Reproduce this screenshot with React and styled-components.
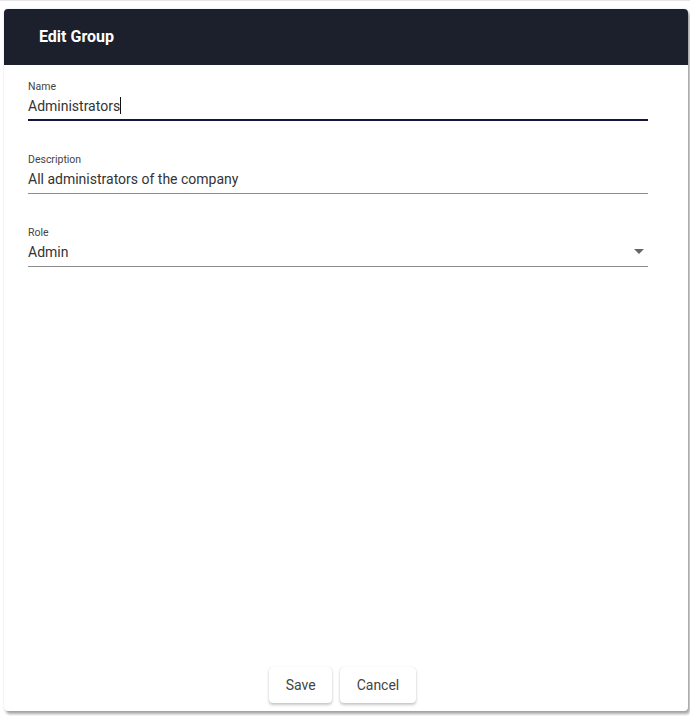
import React from 'react';
import styled, { createGlobalStyle } from 'styled-components';

const GlobalStyle = createGlobalStyle`
    html, body {
        margin: 0;
        padding: 0;
        background: #ffffff;
        font-family: Roboto, "Liberation Sans", sans-serif;
    }
`

const Page = styled.div`
    box-sizing: border-box;
    width: 690px;
    height: 716px;
    padding: 8px 2px 5px 4px;
    border-top: 1px solid #e6e6e6;
`

const Dialog = styled.div`
    box-sizing: border-box;
    height: 702px;
    width: 684px;
    display: flex;
    flex-direction: column;
    background: #ffffff;
    border-radius: 4px;
    overflow: hidden;
    box-shadow: 2px 3px 3px rgba(0,0,0,.35), 0 0 2px rgba(0,0,0,.12);
`

const Header = styled.div`
    height: 56px;
    flex-shrink: 0;
    display: flex;
    align-items: center;
    padding: 0 0 1px 35px;
    box-sizing: border-box;
    background: #1b202c;
    color: #ffffff;
    font-size: 16px;
    font-weight: 700;
`

const Form = styled.div`
    flex: 1;
    display: flex;
    flex-direction: column;
    gap: 32px;
    padding: 15px 40px 0 24px;
`

const Field = styled.div`
    position: relative;
    display: flex;
    flex-direction: column;
    border-bottom: ${p => p.focused ? '2px solid #15163f' : '1px solid #8c8c8c'};
    padding-bottom: ${p => p.focused ? '3px' : '4px'};
`

const Label = styled.label`
    font-size: 10.5px;
    color: #444;
    line-height: 14px;
`

const Value = styled.div`
    font-size: 14px;
    color: #333;
    line-height: 20px;
    margin-top: 2px;
`

const Caret = styled.span`
    display: inline-block;
    width: 1px;
    height: 17px;
    background: #111;
    vertical-align: -3px;
`

const Arrow = styled.span`
    position: absolute;
    right: 4px;
    top: 23px;
    width: 0;
    height: 0;
    border-left: 5px solid transparent;
    border-right: 5px solid transparent;
    border-top: 5px solid #666;
`

const Footer = styled.div`
    display: flex;
    justify-content: center;
    gap: 8px;
    padding: 0 0 8px 0;
    margin-left: -7px;
`

const Button = styled.button`
    height: 36px;
    padding: 0 16.5px;
    border: none;
    border-radius: 4px;
    background: #ffffff;
    color: #444;
    font-family: Roboto, "Liberation Sans", sans-serif;
    font-size: 14px;
    box-shadow: 0 2px 3px rgba(0,0,0,.22), 0 0 1px rgba(0,0,0,.15);
`

export default function App() {
    return (
        <Page>
            <GlobalStyle />
            <Dialog>
                <Header>Edit Group</Header>
                <Form>
                    <Field focused>
                        <Label>Name</Label>
                        <Value>Administrators<Caret /></Value>
                    </Field>
                    <Field>
                        <Label>Description</Label>
                        <Value>All administrators of the company</Value>
                    </Field>
                    <Field>
                        <Label>Role</Label>
                        <Value>Admin</Value>
                        <Arrow />
                    </Field>
                </Form>
                <Footer>
                    <Button>Save</Button>
                    <Button>Cancel</Button>
                </Footer>
            </Dialog>
        </Page>
    )
}
